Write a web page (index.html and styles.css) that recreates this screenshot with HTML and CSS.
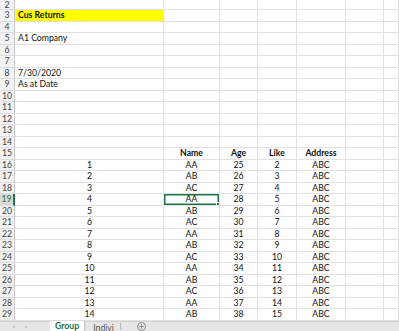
FILE: index.html
```html
<!DOCTYPE html>
<html lang="en">
<head>
  <meta charset="UTF-8" />
  <title>Cus Returns</title>
  <link rel="stylesheet" href="styles.css">
</head>
<body>
  <div class="sheet">
    <div class="row first"><div class="rh">2</div><div></div><div></div><div></div><div></div><div></div><div></div><div></div></div>
    <div class="row"><div class="rh">3</div><div class="fill bold">Cus Returns</div><div></div><div></div><div></div><div></div><div></div><div></div></div>
    <div class="row"><div class="rh">4</div><div></div><div></div><div></div><div></div><div></div><div></div><div></div></div>
    <div class="row"><div class="rh">5</div><div>A1 Company</div><div></div><div></div><div></div><div></div><div></div><div></div></div>
    <div class="row"><div class="rh">6</div><div></div><div></div><div></div><div></div><div></div><div></div><div></div></div>
    <div class="row"><div class="rh">7</div><div></div><div></div><div></div><div></div><div></div><div></div><div></div></div>
    <div class="row"><div class="rh">8</div><div>7/30/2020</div><div></div><div></div><div></div><div></div><div></div><div></div></div>
    <div class="row"><div class="rh">9</div><div>As at Date</div><div></div><div></div><div></div><div></div><div></div><div></div></div>
    <div class="row"><div class="rh">10</div><div></div><div></div><div></div><div></div><div></div><div></div><div></div></div>
    <div class="row"><div class="rh">11</div><div></div><div></div><div></div><div></div><div></div><div></div><div></div></div>
    <div class="row"><div class="rh">12</div><div></div><div></div><div></div><div></div><div></div><div></div><div></div></div>
    <div class="row"><div class="rh">13</div><div></div><div></div><div></div><div></div><div></div><div></div><div></div></div>
    <div class="row"><div class="rh">14</div><div></div><div></div><div></div><div></div><div></div><div></div><div></div></div>
    <div class="row data"><div class="rh">15</div><div></div><div class="bold">Name</div><div class="bold">Age</div><div class="bold">Like</div><div class="bold">Address</div><div></div><div></div></div>
    <div class="row data"><div class="rh">16</div><div>1</div><div>AA</div><div>25</div><div>2</div><div>ABC</div><div></div><div></div></div>
    <div class="row data"><div class="rh">17</div><div>2</div><div>AB</div><div>26</div><div>3</div><div>ABC</div><div></div><div></div></div>
    <div class="row data"><div class="rh">18</div><div>3</div><div>AC</div><div>27</div><div>4</div><div>ABC</div><div></div><div></div></div>
    <div class="row data"><div class="rh active">19</div><div>4</div><div class="selected">AA</div><div>28</div><div>5</div><div>ABC</div><div></div><div></div></div>
    <div class="row data"><div class="rh">20</div><div>5</div><div>AB</div><div>29</div><div>6</div><div>ABC</div><div></div><div></div></div>
    <div class="row data"><div class="rh">21</div><div>6</div><div>AC</div><div>30</div><div>7</div><div>ABC</div><div></div><div></div></div>
    <div class="row data"><div class="rh">22</div><div>7</div><div>AA</div><div>31</div><div>8</div><div>ABC</div><div></div><div></div></div>
    <div class="row data"><div class="rh">23</div><div>8</div><div>AB</div><div>32</div><div>9</div><div>ABC</div><div></div><div></div></div>
    <div class="row data"><div class="rh">24</div><div>9</div><div>AC</div><div>33</div><div>10</div><div>ABC</div><div></div><div></div></div>
    <div class="row data"><div class="rh">25</div><div>10</div><div>AA</div><div>34</div><div>11</div><div>ABC</div><div></div><div></div></div>
    <div class="row data"><div class="rh">26</div><div>11</div><div>AB</div><div>35</div><div>12</div><div>ABC</div><div></div><div></div></div>
    <div class="row data"><div class="rh">27</div><div>12</div><div>AC</div><div>36</div><div>13</div><div>ABC</div><div></div><div></div></div>
    <div class="row data"><div class="rh">28</div><div>13</div><div>AA</div><div>37</div><div>14</div><div>ABC</div><div></div><div></div></div>
    <div class="row data"><div class="rh">29</div><div>14</div><div>AB</div><div>38</div><div>15</div><div>ABC</div><div></div><div></div></div>
  </div>

  <div class="tabs">
    <div class="nav"><span>&#9664;</span><span>&#9654;</span></div>
    <div class="tab current">Group</div>
    <div class="tab">Indivi</div>
    <div class="add">
      <svg width="9" height="9" viewBox="0 0 9 9"><circle cx="4.5" cy="4.5" r="4" fill="none" stroke="#777" stroke-width="0.8"/><path d="M4.5 2.3v4.4M2.3 4.5h4.4" stroke="#777" stroke-width="0.8"/></svg>
    </div>
  </div>
</body>
</html>
```

FILE: styles.css
```css
body {
  margin: 0;
  width: 399px;
  height: 331px;
  overflow: hidden;
  background: white;
  font-family: Lato, "Liberation Sans", sans-serif;
  font-size: 8.7px;
  color: #111;
}

.sheet {
  height: 320.5px;
  overflow: hidden;
}
.row {
  display: grid;
  grid-template-columns: 15px 149px 56px 38px 39px 49px 38px 1fr;
  height: 11.5px;
}
.row.first {
  height: 10px;
}
.row > div {
  box-sizing: border-box;
  border-right: 1px solid #e1e1e1;
  border-bottom: 1px solid #e1e1e1;
  padding: 0 2px;
  line-height: 10.5px;
  white-space: nowrap;
  overflow: hidden;
}
.row.first > div {
  line-height: 9px;
}
.row.data > div {
  text-align: center;
}

.row > .rh {
  background: #f2f2f2;
  color: #444;
  text-align: center;
  padding: 0;
  border-right-color: #c8c8c8;
  border-bottom-color: #dcdcdc;
}
.row > .rh.active {
  background: #d9d9d9;
  color: #217346;
  border-right: 2px solid #217346;
}

.bold {
  font-weight: bold;
}
.row > .fill {
  background: #ffff00;
  padding-left: 3px;
}
.row > div:nth-child(2) {
  padding-left: 3px;
}

.row > .selected {
  position: relative;
  box-shadow: 0 0 0 1.5px #217346 inset;
}
.selected::after {
  content: "";
  position: absolute;
  right: -2px;
  bottom: -2px;
  width: 3px;
  height: 3px;
  background: #217346;
  border: 1px solid white;
}

.tabs {
  display: flex;
  align-items: stretch;
  height: 10.5px;
  background: #e6e6e6;
  border-top: 1px solid #d4d4d4;
  box-sizing: border-box;
  font-size: 8.7px;
}
.nav {
  display: flex;
  gap: 10px;
  width: 50px;
  padding-left: 12px;
  box-sizing: border-box;
  color: #c6c6c6;
  font-size: 4px;
  align-items: center;
}
.tab {
  padding: 0 6px 0 9px;
  line-height: 9.5px;
  color: #555;
  border-right: 1px solid #b8b8b8;
  margin: 1px 0;
}
.tab.current {
  background: white;
  color: #217346;
  font-weight: bold;
  padding: 0 5px;
  margin: -1px 0 0;
  line-height: 10.5px;
  border-right: none;
  box-shadow: 1px 0 1px rgba(0, 0, 0, 0.15);
}
.add {
  display: flex;
  align-items: center;
  padding-left: 16px;
}
```
